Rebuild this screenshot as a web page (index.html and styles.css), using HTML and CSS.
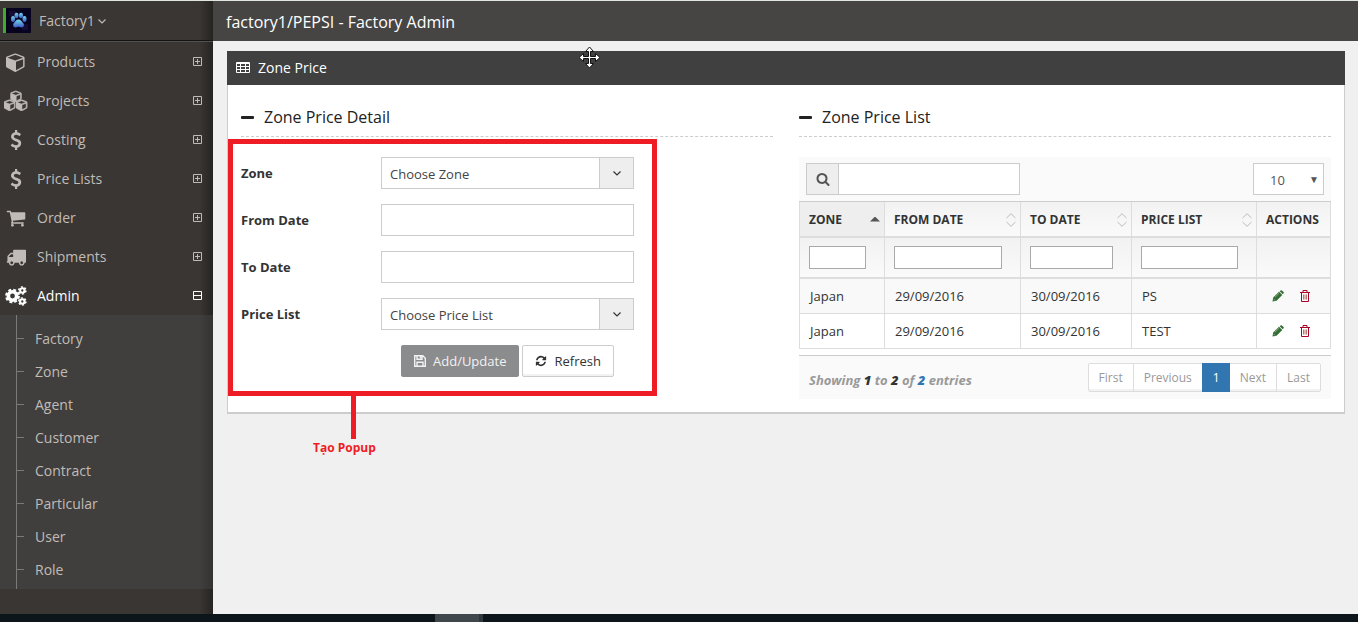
FILE: index.html
```html
<!DOCTYPE html>
<html lang="en">
<head>
<meta charset="utf-8">
<title>Factory Admin - Zone Price</title>
<link rel="stylesheet" href="styles.css">
</head>
<body>
<svg class="sprite" aria-hidden="true">
  <symbol id="cube" viewBox="0 0 1792 1792"><path d="M896 1629l640-349v-636l-640 233v752zm-64-865l698-254-698-254-698 254zm832-252v768q0 35-18 65t-49 47l-704 384q-28 16-61 16t-61-16l-704-384q-31-17-49-47t-18-65v-768q0-40 23-73t61-47l704-256q22-8 44-8t44 8l704 256q38 14 61 47t23 73z"/></symbol>
  <symbol id="cubes" viewBox="0 0 24 20"><g stroke="currentColor" stroke-width="90"><use href="#cube" x="6" y="0" width="11.500" height="11.500"/><use href="#cube" x="0" y="8.500" width="11.500" height="11.500"/><use href="#cube" x="11.500" y="8.500" width="11.500" height="11.500"/></g></symbol>
  <symbol id="dollar" viewBox="0 0 1792 1792"><path d="M1362 1185q0 153-99.500 263.500t-258.500 136.500v175q0 14-9 23t-23 9h-135q-13 0-22.500-9.500t-9.500-22.500v-175q-66-9-127.500-31t-101.500-44.500-74-48-46.500-37.500-17.500-18q-17-21-2-41l103-135q7-10 23-12 15-2 24 9l2 2q113 99 243 125 37 8 74 8 81 0 142.500-43t61.500-122q0-28-15-53t-33.500-42-58.500-37.500-66-32-80-32.500q-39-16-61.500-25t-61.500-26.500-62.500-31-56.500-35.500-53.500-42.500-43.500-49-35.500-58-21-66.500-8.500-78q0-138 98-242t255-134v-180q0-13 9.500-22.500t22.500-9.500h135q14 0 23 9t9 23v176q57 6 110.500 23t87 33.500 63.500 37.500 39 29 15 14q17 18 5 38l-81 146q-8 15-23 16-14 3-27-7-3-3-14.500-12t-39-26.500-58.500-32-74.500-26-85.500-11.500q-95 0-155 43t-60 111q0 26 8.500 48t29.500 41.500 39.500 33 56 31 60.500 27 70 27.500q53 20 81 31.500t76 35 75.500 42.500 62 50 53 63.500 31.500 76.500 13 94z"/></symbol>
  <symbol id="cart" viewBox="0 0 1792 1792"><path d="M704 1536q0 52-38 90t-90 38-90-38-38-90 38-90 90-38 90 38 38 90zm896 0q0 52-38 90t-90 38-90-38-38-90 38-90 90-38 90 38 38 90zm128-1088v512q0 24-16.500 42.500t-40.500 21.500l-1044 122q13 60 13 70 0 16-24 64h920q26 0 45 19t19 45-19 45-45 19h-1024q-26 0-45-19t-19-45q0-11 8-31.500t16-36 21.500-40 15.500-29.500l-177-823h-204q-26 0-45-19t-19-45 19-45 45-19h256q16 0 28.500 6.500t19.500 15.500 13 24.500 8 26 5.500 29.500 4.500 26h1201q26 0 45 19t19 45z"/></symbol>
  <symbol id="truck" viewBox="0 0 1792 1792"><path d="M640 1408q0-52-38-90t-90-38-90 38-38 90 38 90 90 38 90-38 38-90zm-384-512h384v-256h-158q-13 0-22 9l-195 195q-9 9-9 22v30zm1280 512q0-52-38-90t-90-38-90 38-38 90 38 90 90 38 90-38 38-90zm256-1088v1024q0 15-4 26.500t-13.500 18.500-16.500 11.500-23.500 6-22.500 2-25.500 0-22.500-.5q0 106-75 181t-181 75-181-75-75-181h-384q0 106-75 181t-181 75-181-75-75-181h-64q-3 0-22.500.5t-25.500 0-22.500-2-23.500-6-16.500-11.500-13.500-18.500-4-26.500q0-26 19-45t45-19v-320q0-8-.5-35t0-38 2.500-34.500 6.500-37 14-30.500 22.500-30l198-198q19-19 50.500-32t58.500-13h160v-192q0-26 19-45t45-19h1024q26 0 45 19t19 45z"/></symbol>
  <symbol id="gears" viewBox="0 0 22 20"><g fill="none" stroke="currentColor"><circle cx="7.500" cy="10" r="4.200" stroke-width="3.600"/><circle cx="7.500" cy="10" r="6.400" stroke-width="2" stroke-dasharray="2.900 2.126"/><circle cx="17.300" cy="4.500" r="2.200" stroke-width="2.100"/><circle cx="17.300" cy="4.500" r="3.600" stroke-width="1.500" stroke-dasharray="2 1.770"/><circle cx="17.300" cy="15.500" r="2.200" stroke-width="2.100"/><circle cx="17.300" cy="15.500" r="3.600" stroke-width="1.500" stroke-dasharray="2 1.770"/></g></symbol>
  <symbol id="plus" viewBox="0 0 9 9"><path fill="none" stroke="currentColor" d="M.5.5h8v8h-8zM2 4.500h5M4.500 2v5"/></symbol>
  <symbol id="minus" viewBox="0 0 9 9"><path fill="none" stroke="currentColor" d="M.5.5h8v8h-8zM1 4.500h7"/></symbol>
  <symbol id="chevron" viewBox="0 0 10 10"><path fill="none" stroke="currentColor" stroke-width="1.200" d="M1.500 3.500L5 7l3.500-3.500"/></symbol>
  <symbol id="table" viewBox="0 0 14 12"><path fill-rule="evenodd" d="M1 0h12a1 1 0 0 1 1 1v9a1 1 0 0 1-1 1H1a1 1 0 0 1-1-1V1a1 1 0 0 1 1-1zM1 2v2h3V2zm4 0v2h4V2zm5 0v2h3V2zM1 5v2h3V5zm4 0v2h4V5zm5 0v2h3V5zM1 8v2h3V8zm4 0v2h4V8zm5 0v2h3V8z"/></symbol>
  <symbol id="search" viewBox="0 0 1792 1792"><path d="M1216 832q0-185-131.500-316.500t-316.500-131.500-316.500 131.500-131.500 316.500 131.500 316.500 316.500 131.500 316.500-131.500 131.500-316.500zm512 832q0 52-38 90t-90 38q-54 0-90-38l-343-342q-179 124-399 124-143 0-273.500-55.500t-225-150-150-225-55.500-273.500 55.500-273.500 150-225 225-150 273.500-55.500 273.500 55.500 225 150 150 225 55.500 273.500q0 220-124 399l343 343q37 37 37 90z"/></symbol>
  <symbol id="refresh" viewBox="0 0 1792 1792"><path d="M1639 1056q0 5-1 7-64 268-268 434.500t-478 166.500q-146 0-282.500-55t-243.500-157l-129 129q-19 19-45 19t-45-19-19-45v-448q0-26 19-45t45-19h448q26 0 45 19t19 45-19 45l-137 137q71 66 161 102t187 36q134 0 250-65t186-179q11-17 53-117 8-23 30-23h192q13 0 22.500 9.500t9.500 22.500zm25-800v448q0 26-19 45t-45 19h-448q-26 0-45-19t-19-45 19-45l138-138q-148-137-349-137-134 0-250 65t-186 179q-11 17-53 117-8 23-30 23h-199q-13 0-22.500-9.500t-9.500-22.500v-7q65-268 270-434.500t480-166.500q146 0 284 55.500t245 156.500l130-129q19-19 45-19t45 19 19 45z"/></symbol>
  <symbol id="save" viewBox="0 0 12 12"><path fill="none" stroke="currentColor" stroke-width="1.400" d="M.7.7h8.100l2.500 2.500v8.100H.7zM3 11V7.200h6V11M3 1v3.200h5V1"/><path d="M5.800 1h1.700v2.500H5.800z"/></symbol>
  <symbol id="pencil" viewBox="0 0 12 12"><path fill="#356e35" d="M.5 11.500l.7-4L7 1.700l3.300 3.300-5.800 5.800zM7.600 1.200L8.700.4q.6-.4 1.200 0l1.700 1.700q.4.600 0 1.200l-.8 1z"/><path fill="none" stroke="#9cb38f" stroke-width=".8" d="M1.500 8.800l1.700 1.700M3 7.200L7 3.300"/></symbol>
  <symbol id="trash" viewBox="0 0 10 12"><path fill="none" stroke="#a90329" d="M0 2.500h10M3 2.500v-2h4v2M1.500 3v8.500h7V3"/><path fill="none" stroke="#b8786a" d="M3.500 4.500v5M5 4.500v5M6.500 4.500v5"/></symbol>
  <symbol id="sort" viewBox="0 0 10 14"><path fill="none" stroke="#bbb" d="M.5 5L5 .7 9.500 5M.5 9L5 13.300 9.500 9"/></symbol>
  <symbol id="asc" viewBox="0 0 10 14"><path fill="#555" d="M0 8.500h10L5.500 4h-1z"/></symbol>
</svg>

<div class="app">
  <nav class="sidebar">
    <button class="user" type="button">
      <svg class="avatar" viewBox="0 0 25 25"><defs><linearGradient id="paw" x2="0" y2="1"><stop stop-color="#78d8ec"/><stop offset="1" stop-color="#395ac4"/></linearGradient></defs><path fill="#08031f" d="M0 0h25v25H0z"/><path fill="#170c35" d="M3 3h7v5H3zm13 13h6v6h-6z"/><g fill="url(#paw)"><ellipse cx="7" cy="11" rx="2" ry="3"/><ellipse cx="10.500" cy="7.500" rx="2" ry="2.800"/><ellipse cx="15" cy="7.500" rx="2" ry="2.800"/><ellipse cx="18.500" cy="11" rx="2" ry="3"/><path d="M12.500 11.500c2.500 0 3 2 4.500 3.500s1 4.500-1.500 4.500c-1.500 0-2-.7-3-.7s-1.500.7-3 .7C7 19.500 6.500 16.500 8 15s2-3.500 4.500-3.500z"/></g></svg>
      <span>Factory1</span><svg class="caret"><use href="#chevron"/></svg>
    </button>
    <ul class="menu">
      <li><a href="#"><svg class="mi"><use href="#cube"/></svg><span>Products</span><svg class="box"><use href="#plus"/></svg></a></li>
      <li><a href="#"><svg class="mi wide"><use href="#cubes"/></svg><span>Projects</span><svg class="box"><use href="#plus"/></svg></a></li>
      <li><a href="#"><svg class="mi"><use href="#dollar"/></svg><span>Costing</span><svg class="box"><use href="#plus"/></svg></a></li>
      <li><a href="#"><svg class="mi"><use href="#dollar"/></svg><span>Price Lists</span><svg class="box"><use href="#plus"/></svg></a></li>
      <li><a href="#"><svg class="mi"><use href="#cart"/></svg><span>Order</span><svg class="box"><use href="#plus"/></svg></a></li>
      <li><a href="#"><svg class="mi"><use href="#truck"/></svg><span>Shipments</span><svg class="box"><use href="#plus"/></svg></a></li>
      <li><a class="active" href="#"><svg class="mi gear"><use href="#gears"/></svg><span>Admin</span><svg class="box"><use href="#minus"/></svg></a>
        <ul class="submenu">
          <li><a href="#">Factory</a></li><li><a href="#">Zone</a></li><li><a href="#">Agent</a></li><li><a href="#">Customer</a></li><li><a href="#">Contract</a></li><li><a href="#">Particular</a></li><li><a href="#">User</a></li><li><a href="#">Role</a></li>
        </ul>
      </li>
    </ul>
  </nav>
  <div class="page">
    <header class="topbar">factory1/PEPSI - Factory Admin</header>
    <main>
      <section class="widget">
        <h2><svg class="ti"><use href="#table"/></svg>Zone Price</h2>
        <div class="columns">
          <section class="col">
            <h3>Zone Price Detail</h3>
            <form class="form">
              <div class="row"><label for="zone">Zone</label><div class="pick"><select id="zone"><option>Choose Zone</option></select><span><svg><use href="#chevron"/></svg></span></div></div>
              <div class="row"><label for="from">From Date</label><input id="from" type="text"></div>
              <div class="row"><label for="to">To Date</label><input id="to" type="text"></div>
              <div class="row"><label for="price">Price List</label><div class="pick"><select id="price"><option>Choose Price List</option></select><span><svg><use href="#chevron"/></svg></span></div></div>
              <div class="buttons"><button class="btn primary" type="button"><svg><use href="#save"/></svg>Add/Update</button><button class="btn" type="button"><svg><use href="#refresh"/></svg>Refresh</button></div>
              <div class="note"><span class="stem"></span><span class="note-text">Tạo Popup</span></div>
            </form>
          </section>
          <section class="col">
            <h3>Zone Price List</h3>
            <div class="toolbar">
              <div class="search"><label for="q" aria-label="Search"><svg><use href="#search"/></svg></label><input id="q" type="text"></div>
              <div class="length"><select aria-label="Entries per page"><option>10</option></select><span>▼</span></div>
            </div>
            <table>
              <colgroup><col class="c1"><col class="c2"><col class="c3"><col class="c4"><col class="c5"></colgroup>
              <thead>
                <tr class="heads">
                  <th class="sorted"><button type="button">ZONE<svg><use href="#asc"/></svg></button></th>
                  <th><button type="button">FROM DATE<svg><use href="#sort"/></svg></button></th>
                  <th><button type="button">TO DATE<svg><use href="#sort"/></svg></button></th>
                  <th><button type="button">PRICE LIST<svg><use href="#sort"/></svg></button></th>
                  <th>ACTIONS</th>
                </tr>
                <tr class="filters">
                  <td><input type="text" aria-label="Filter zone"></td><td><input type="text" aria-label="Filter from date"></td><td><input type="text" aria-label="Filter to date"></td><td><input type="text" aria-label="Filter price list"></td><td></td>
                </tr>
              </thead>
              <tbody>
                <tr><td>Japan</td><td>29/09/2016</td><td>30/09/2016</td><td>PS</td><td><div class="acts"><button type="button" aria-label="Edit"><svg><use href="#pencil"/></svg></button><button type="button" aria-label="Delete"><svg class="bin"><use href="#trash"/></svg></button></div></td></tr>
                <tr><td>Japan</td><td>29/09/2016</td><td>30/09/2016</td><td>TEST</td><td><div class="acts"><button type="button" aria-label="Edit"><svg><use href="#pencil"/></svg></button><button type="button" aria-label="Delete"><svg class="bin"><use href="#trash"/></svg></button></div></td></tr>
              </tbody>
            </table>
            <div class="tfoot">
              <p>Showing <b>1</b> to <b>2</b> of <b class="total">2</b> entries</p>
              <div class="pager"><a href="#">First</a><a href="#">Previous</a><a class="on" href="#">1</a><a href="#">Next</a><a href="#">Last</a></div>
            </div>
          </section>
        </div>
      </section>
    </main>
  </div>
</div>
<footer class="taskbar"><span></span></footer>
<svg class="pointer" viewBox="0 0 23 23"><path fill="#fff" stroke="#111" stroke-linejoin="round" d="M11.500 1l4 4.500h-3v5h5v-3l4.500 4-4.500 4v-3h-5v5h3l-4 4.500-4-4.500h3v-5h-5v3L1 11.500l4.500-4v3h5v-5h-3z"/></svg>
</body>
</html>
```
FILE: styles.css
```css
* { box-sizing: border-box; }
body {
  margin: 0;
  min-height: 100vh;
  display: flex;
  flex-direction: column;
  border-top: 1px solid #dfe5e0;
  background: #f0f0f0;
  color: #333;
  font: 13px/20px "Open Sans", "Noto Sans", sans-serif;
}
ul { list-style: none; margin: 0; padding: 0; }
a { color: inherit; text-decoration: none; }
button, input, select { font: inherit; color: inherit; }
svg { fill: currentColor; flex: none; display: block; }
.sprite { position: absolute; width: 0; height: 0; }
.app { flex: 1; display: flex; }

.sidebar {
  flex: 0 0 213px;
  background: linear-gradient(to left, rgba(0,0,0,.35), transparent 14px), #3a3633;
  color: #c0bbb7;
  font-size: 14px;
}
.user {
  width: 100%;
  height: 40px;
  display: flex;
  align-items: center;
  padding: 0 3px;
  border: 0;
  border-bottom: 1px solid #151413;
  background: none;
}
.avatar { width: 28px; height: 25px; border-left: 3px solid #40ac2b; margin-right: 8px; }
.caret { width: 10px; height: 10px; margin-left: 2px; }
.menu { border-top: 1px solid #525151; }
.menu > li > a { display: flex; align-items: center; height: 39px; padding: 0 11px 0 6px; }
.menu span { flex: 1; }
.mi { width: 20px; height: 20px; margin-right: 11px; }
.mi.wide { width: 25px; height: 21px; margin: 0 8px 0 -2px; }
.mi.gear { width: 22px; height: 20px; margin: 0 10px 0 -1px; }
.box { width: 9px; height: 9px; }
.menu > li > .active { color: #fff; }
.submenu {
  display: grid;
  grid-template-columns: 16px 1fr;
  padding: 7px 0 3px;
  background: linear-gradient(to left, rgba(0,0,0,.2), transparent 14px), #403f3d;
}
.submenu::before { content: ""; grid-row: 1 / 9; border-right: 1px solid #7a7a7a; margin: -7px -1px -3px 0; }
.submenu li { grid-column: 2; height: 33px; display: flex; align-items: center; }
.submenu li::before { content: ""; width: 8px; border-top: 1px solid #7a7a7a; }
.submenu a { padding-left: 11px; }

.page { flex: 1; min-width: 0; }
.topbar { height: 40px; padding: 0 13px; background: #474544; color: #fff; font-size: 16px; line-height: 42px; }
main { padding: 10px 13px 0 14px; }
.widget { border: 1px solid #ccc; border-width: 0 1px 2px; background: #fff; }
h2 {
  display: flex;
  align-items: center;
  gap: 8px;
  height: 34px;
  margin: 0 -1px;
  padding: 0 9px;
  background: #404040;
  color: #fff;
  font-size: 14px;
  font-weight: 400;
  line-height: 36px;
}
.ti { width: 14px; height: 12px; }
.columns { display: grid; grid-template-columns: 1fr 1fr; gap: 26px; padding: 13px; }
.col { min-width: 0; }
h3 {
  display: flex;
  align-items: center;
  gap: 10px;
  height: 39px;
  margin: 0 0 20px;
  border-bottom: 1px dashed #ccc;
  color: #222;
  font-size: 16px;
  font-weight: 400;
}
h3::before { content: ""; width: 13px; height: 3px; border-radius: 1px; background: #222; }

.form { position: relative; display: grid; gap: 15px; }
.row { display: flex; align-items: center; }
.row label { flex: 0 0 140px; font-weight: 700; }
.row input, .pick { width: 253px; height: 32px; border: 1px solid #ccc; background: #fff; }
.pick { display: flex; }
.pick select { flex: 1; min-width: 0; appearance: none; border: 0; background: none; padding: 2px 8px 0; color: #444; }
.pick span { width: 34px; display: grid; place-items: center; border-left: 1px solid #ccc; background: #eee; }
.pick svg { width: 10px; height: 10px; }
.buttons { display: flex; gap: 3px; padding-left: 160px; }
.btn {
  height: 32px;
  display: flex;
  align-items: center;
  gap: 7px;
  padding: 0 12px;
  border: 1px solid #ccc;
  border-radius: 2px;
  background: #fff;
  box-shadow: inset 0 -2px 0 rgba(0,0,0,.05);
  color: #333;
}
.btn svg { width: 12px; height: 12px; }
.btn.primary { border-color: #8b8c8e; background: #8b8c8e; color: #f2f2f2; box-shadow: none; }
.note {
  position: absolute;
  inset: -18px auto -19px -13px;
  width: 429px;
  border: 5px solid #ee1c25;
  color: #ee1c25;
  pointer-events: none;
}
.stem { position: absolute; top: 100%; left: 118px; width: 5px; height: 48px; background: #ee1c25; }
.note-text { position: absolute; top: calc(100% + 47px); left: 80px; font-size: 12px; font-weight: 700; white-space: nowrap; }

.toolbar { display: flex; justify-content: space-between; padding: 6px 7px; background: #fafafa; border-bottom: 1px solid #ccc; }
.search { display: flex; width: 214px; height: 32px; border: 1px solid #ccc; }
.search label { width: 32px; display: grid; place-items: center; border-right: 1px solid #ccc; background: #eee; color: #555; }
.search svg { width: 14px; height: 14px; }
.search input { flex: 1; min-width: 0; border: 0; background: #fff; }
.length { display: flex; align-items: center; width: 71px; height: 32px; border: 1px solid #ccc; background: #fff; color: #555; }
.length select { flex: 1; height: 100%; appearance: none; border: 0; background: none; padding: 2px 0 0 16px; }
.length span { width: 14px; font-size: 10px; }

table { width: 100%; border-collapse: separate; border-spacing: 0; table-layout: fixed; border-left: 1px solid #ddd; }
.c1 { width: 85px; } .c2 { width: 136px; } .c3 { width: 111px; } .c4 { width: 125px; } .c5 { width: 74px; }
th, td { padding: 0 10px; border: 1px solid #ddd; border-width: 0 1px 1px 0; text-align: left; }
thead th, thead td { padding: 0 9px; border-bottom-width: 2px; background: linear-gradient(#f2f2f2, #fafafa); }
thead th { height: 36px; padding-top: 2px; font-size: 12px; font-weight: 700; }
thead .sorted { background: #eee; }
.heads th:not(:last-child) { padding-right: 4px; }
th button { width: 100%; display: flex; align-items: center; justify-content: space-between; padding: 0; border: 0; background: none; text-align: left; }
th svg { width: 10px; height: 14px; }
.filters td { height: 41px; padding-right: 18px; }
.filters input { display: block; width: 100%; height: 23px; border: 1px solid #a9a9a9; background: #fff; }
tbody td { height: 35px; }
tbody tr:first-child td { background: #f9f9f9; }
.acts { display: flex; gap: 16px; padding-left: 5px; }
.acts button { padding: 0; border: 0; background: none; }
.acts svg { width: 12px; height: 12px; }
.acts .bin { width: 10px; }
.tfoot { display: flex; justify-content: space-between; align-items: center; height: 44px; margin-top: 6px; padding: 0 10px; border-top: 1px solid #ccc; background: #fafafa; }
.tfoot p { margin: 0; padding-top: 4px; color: #999; font-style: italic; font-weight: 700; }
.tfoot b { color: #333; }
.tfoot .total { color: #3276b1; }
.pager { display: flex; border: 1px solid #ddd; border-radius: 2px; background: #fff; box-shadow: inset 0 -2px 0 rgba(0,0,0,.05); color: #999; }
.pager a { padding: 4px 10px; height: 27px; font-size: 12px; border-left: 1px solid #ddd; }
.pager a:first-child, .pager .on + a { border-left: 0; }
.pager .on { margin: -1px 0; height: 29px; padding-top: 5px; background: #3276b1; border-color: #3276b1; color: #fff; }

.taskbar { height: 8px; padding-left: 32%; background: #0b151a; }
.taskbar span { display: block; width: 48px; height: 8px; background: #3f474a; border-right: 4px solid #30383b; }
.pointer { position: absolute; left: 578px; top: 46px; width: 23px; height: 23px; }
```
